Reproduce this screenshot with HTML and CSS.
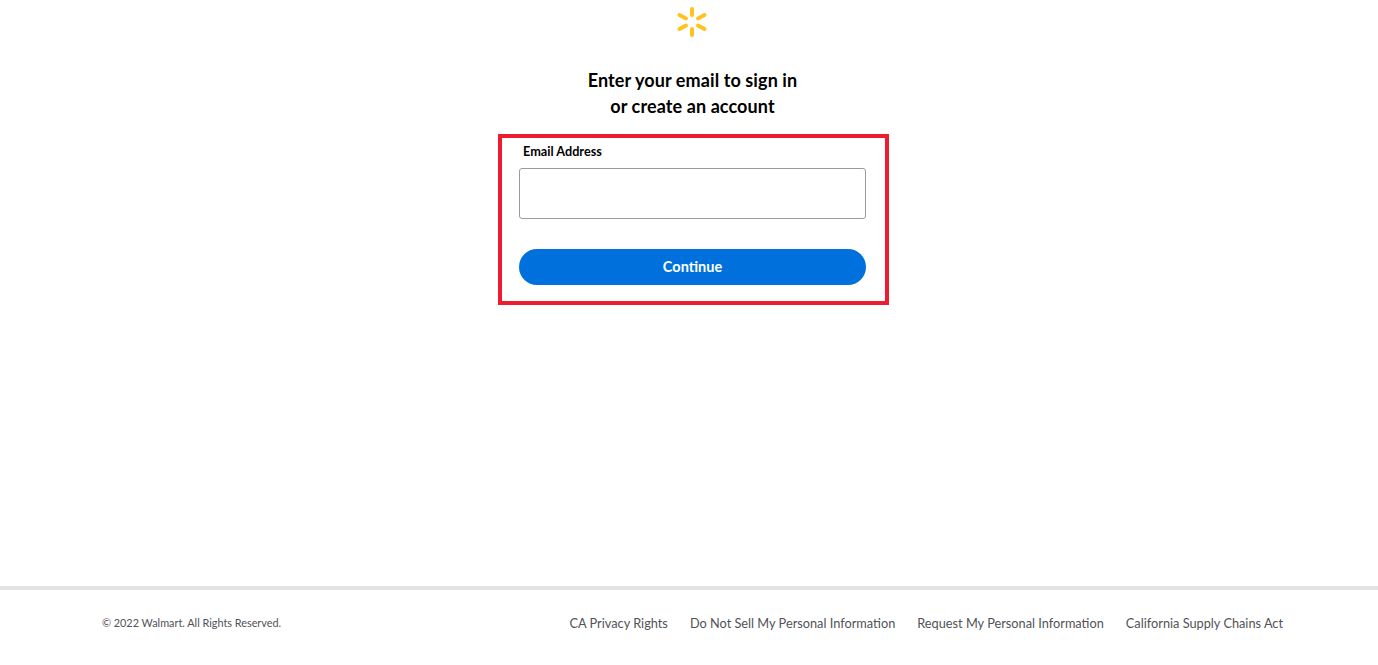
FILE: index.html
```html
<!DOCTYPE html>
<html lang="en">
<head>
    <meta charset="UTF-8">
    <meta name="viewport" content="width=device-width, initial-scale=1.0">
    <title>Sign in</title>
    <link rel="stylesheet" href="styles.css">
</head>
<body>
    <main class="content">
        <svg class="logo" width="32" height="32" viewBox="-16 -16 32 32" aria-label="Walmart">
            <g stroke="#ffc220" stroke-width="4" stroke-linecap="round">
                <line x1="0" y1="-13" x2="0" y2="-7"/>
                <line x1="0" y1="13" x2="0" y2="7"/>
                <line x1="-12.5" y1="-7" x2="-6" y2="-3.6"/>
                <line x1="12.5" y1="-7" x2="6" y2="-3.6"/>
                <line x1="-12.5" y1="7" x2="-6" y2="3.6"/>
                <line x1="12.5" y1="7" x2="6" y2="3.6"/>
            </g>
        </svg>
        <h1 class="title">Enter your email to sign in<br>or create an account</h1>
        <form class="signin">
            <label class="field-label" for="email">Email Address</label>
            <input class="field-input" type="text" id="email" name="email">
            <button class="continue" type="submit">Continue</button>
        </form>
    </main>
    <footer class="footer">
        <span class="copyright">© 2022 Walmart. All Rights Reserved.</span>
        <nav class="footer-links">
            <a href="#">CA Privacy Rights</a>
            <a href="#">Do Not Sell My Personal Information</a>
            <a href="#">Request My Personal Information</a>
            <a href="#">California Supply Chains Act</a>
        </nav>
    </footer>
</body>
</html>
```

FILE: styles.css
```css
* {
    box-sizing: border-box;
}
body {
    margin: 0;
    height: 665px;
    display: flex;
    flex-direction: column;
    background: #fff;
    font-family: Lato, "Liberation Sans", sans-serif;
    overflow: hidden;
}
.content {
    flex: 1;
    display: flex;
    flex-direction: column;
    align-items: center;
    padding-left: 7px;
}
.logo {
    display: block;
    margin: 6px 1px 0 0;
}
.title {
    margin: 29px 0 0;
    font-size: 18px;
    font-weight: 700;
    line-height: 26px;
    letter-spacing: 0.1px;
    text-align: center;
    color: #000;
}
.signin {
    width: 391px;
    height: 170.5px;
    margin: 15px 0 0 2px;
    padding: 5px 19px 0 17px;
    border: 4px solid #ed1c2e;
    display: flex;
    flex-direction: column;
}
.field-label {
    margin-left: 4px;
    font-size: 12.7px;
    font-weight: 700;
    line-height: 16px;
    color: #000;
}
.field-input {
    height: 51px;
    margin-top: 9px;
    border: 1px solid #9a9b9d;
    border-radius: 3px;
    background: #fff;
}
.continue {
    height: 36.5px;
    margin-top: 29.5px;
    border: none;
    border-radius: 19px;
    background: #0071dc;
    color: #fff;
    font-family: inherit;
    font-size: 14.5px;
    font-weight: 700;
}
.footer {
    height: 79px;
    border-top: 4px solid #e3e4e5;
    padding: 0 95px 10px 102px;
    display: flex;
    justify-content: space-between;
    align-items: center;
    color: #515256;
}
.copyright {
    font-size: 10.85px;
}
.footer-links {
    display: flex;
    gap: 22px;
}
.footer-links a {
    font-size: 12.75px;
    color: #515256;
    text-decoration: none;
}
```
